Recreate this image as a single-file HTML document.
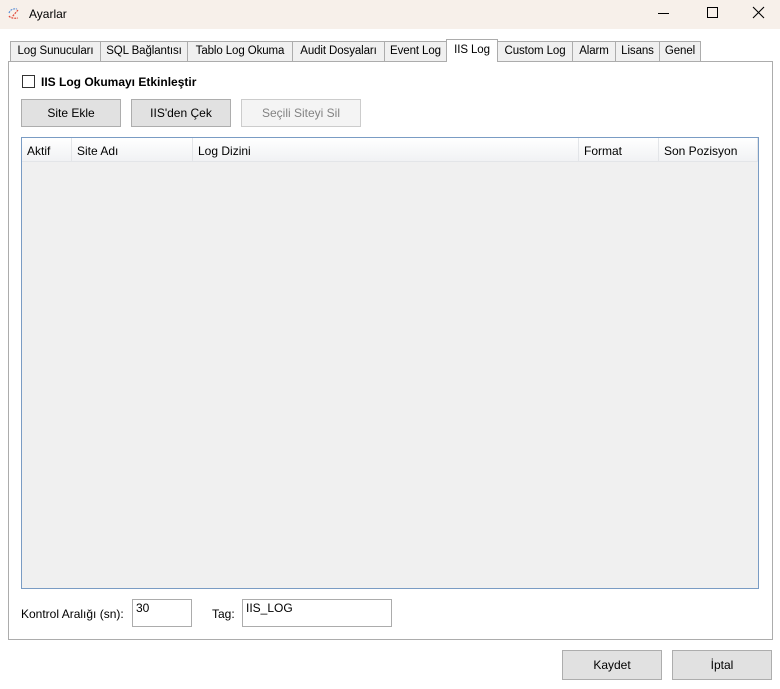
<!DOCTYPE html>
<html><head><meta charset="utf-8"><style>
*{box-sizing:border-box;margin:0;padding:0}
body{width:780px;height:689px;background:#fff;font-family:"Liberation Sans",sans-serif;font-size:12px;color:#000;position:relative;overflow:hidden}
.a{position:absolute}
.title{left:0;top:0;width:780px;height:29px;background:#f7f0ea}
.tab{position:absolute;top:41px;height:20px;background:#f0f0f0;border:1px solid #acacac;border-bottom:none;text-align:center;line-height:19px;font-size:11.5px;white-space:nowrap;overflow:hidden;letter-spacing:-0.1px}
.tab.sel{top:39px;height:23px;background:#fff;z-index:2;line-height:21px}
.page{left:8px;top:61px;width:765px;height:579px;border:1px solid #acacac;background:#fff}
.btn{position:absolute;background:#e1e1e1;border:1px solid #adadad;text-align:center;font-size:12px}
.btn.dis{background:#f4f4f4;border-color:#cccccc;color:#838383}
.grid{left:21px;top:137px;width:738px;height:452px;border:1px solid #7a9cc4;background:#f0f0f0}
.hdr{position:absolute;top:0;height:24px;background:linear-gradient(#fff,#f1f2f4);border-right:1px solid #e3e5e8;border-bottom:1px solid #e3e5e8;line-height:26px;padding-left:5px}
.tb{position:absolute;border:1px solid #acacac;background:#fff;padding:1px 3px;font-size:12px}
</style></head><body>
<div class="a title"></div>
<svg class="a" style="left:7px;top:7px" width="14" height="14" viewBox="0 0 14 14"><path d="M2 6 Q4 1 10 2" stroke="#5b8fd6" fill="none" stroke-width="1.2" stroke-dasharray="2 1"/><path d="M11 3 L5 10 M2 9 Q4 12 11 11" stroke="#e04a3a" fill="none" stroke-width="1.2" stroke-dasharray="2 1"/></svg>
<div class="a" style="left:29px;top:7px;font-size:12px">Ayarlar</div>
<div class="a" style="left:658px;top:13px;width:11px;height:1px;background:#000"></div>
<div class="a" style="left:707px;top:7px;width:11px;height:11px;border:1px solid #000"></div>
<svg class="a" style="left:752px;top:6px" width="13" height="13"><path d="M1 1L12 12M12 1L1 12" stroke="#000" stroke-width="1.1"/></svg>

<div class="tab" style="left:10px;width:91px">Log Sunucuları</div>
<div class="tab" style="left:100px;width:88px">SQL Bağlantısı</div>
<div class="tab" style="left:187px;width:106px">Tablo Log Okuma</div>
<div class="tab" style="left:292px;width:93px">Audit Dosyaları</div>
<div class="tab" style="left:384px;width:63px">Event Log</div>
<div class="tab sel" style="left:446px;width:52px">IIS Log</div>
<div class="tab" style="left:497px;width:76px">Custom Log</div>
<div class="tab" style="left:572px;width:44px">Alarm</div>
<div class="tab" style="left:615px;width:45px">Lisans</div>
<div class="tab" style="left:659px;width:42px">Genel</div>
<div class="a page"></div>

<div class="a" style="left:22px;top:75px;width:13px;height:13px;border:1px solid #333;background:#fff"></div>
<div class="a" style="left:41px;top:75px;font-weight:bold">IIS Log Okumayı Etkinleştir</div>
<div class="btn" style="left:21px;top:99px;width:100px;height:28px;line-height:26px">Site Ekle</div>
<div class="btn" style="left:131px;top:99px;width:100px;height:28px;line-height:26px">IIS'den Çek</div>
<div class="btn dis" style="left:241px;top:99px;width:120px;height:28px;line-height:26px">Seçili Siteyi Sil</div>

<div class="a grid">
<div class="hdr" style="left:0;width:50px">Aktif</div>
<div class="hdr" style="left:50px;width:121px">Site Adı</div>
<div class="hdr" style="left:171px;width:386px">Log Dizini</div>
<div class="hdr" style="left:557px;width:80px">Format</div>
<div class="hdr" style="left:637px;width:99px">Son Pozisyon</div>
</div>

<div class="a" style="left:21px;top:607px">Kontrol Aralığı (sn):</div>
<div class="tb" style="left:132px;top:599px;width:60px;height:28px">30</div>
<div class="a" style="left:212px;top:607px">Tag:</div>
<div class="tb" style="left:242px;top:599px;width:150px;height:28px">IIS_LOG</div>

<div class="btn" style="left:562px;top:650px;width:100px;height:30px;line-height:28px">Kaydet</div>
<div class="btn" style="left:672px;top:650px;width:100px;height:30px;line-height:28px">İptal</div>
</body></html>
